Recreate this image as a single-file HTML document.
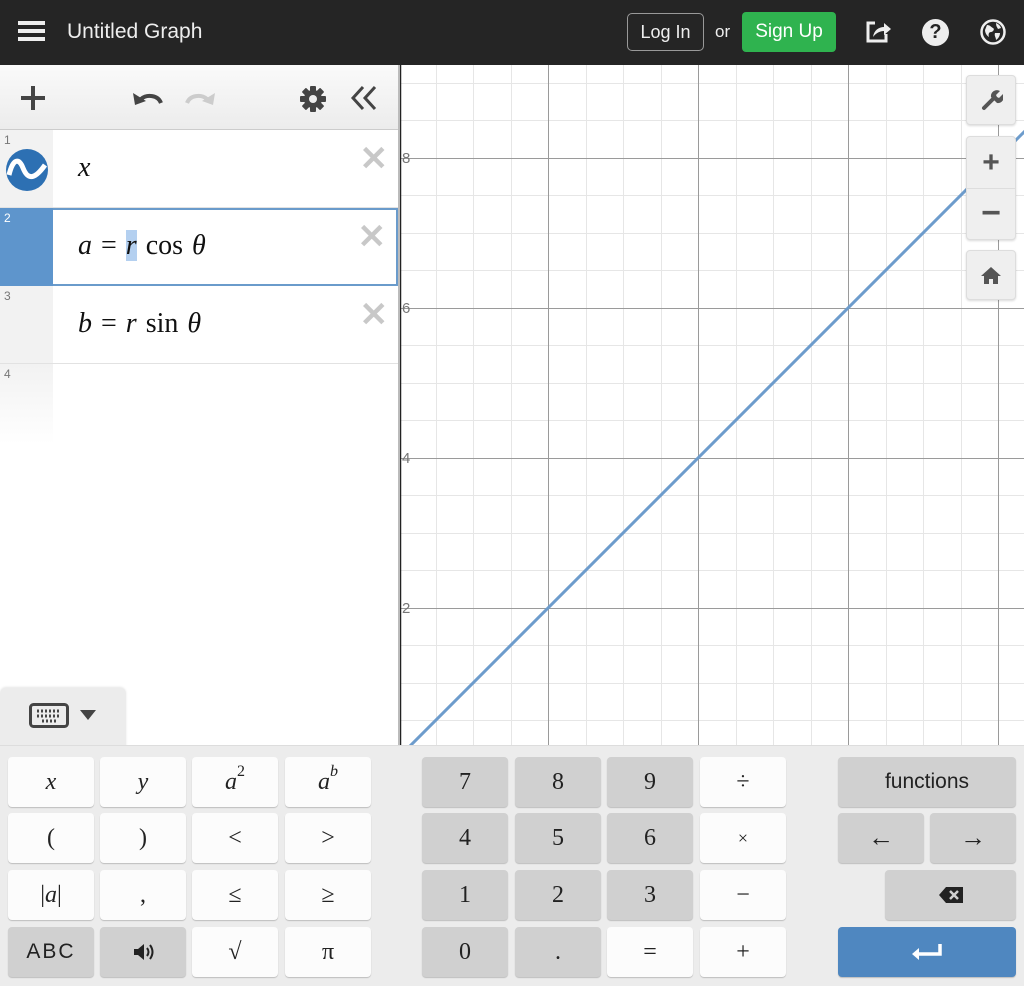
<!DOCTYPE html>
<html><head><meta charset="utf-8"><style>
*{box-sizing:border-box;margin:0;padding:0}
body{width:1024px;height:986px;overflow:hidden;background:#fff;font-family:"Liberation Sans",sans-serif;position:relative}
.hdr{position:absolute;left:0;top:0;width:1024px;height:65px;background:#252525;color:#eee}
.abs{position:absolute}
.tb{position:absolute;left:0;top:65px;width:398px;height:65px;background:linear-gradient(#fafafa,#ececec);border-bottom:1px solid #ccc}
.row{position:absolute;left:0;width:398px;height:78px;border-bottom:1px solid #e2e2e2;background:#fff}
.gut{position:absolute;left:0;top:0;width:53px;height:100%;background:#f2f2f2}
.num{position:absolute;left:4px;top:3px;font-size:12px;color:#777}
.math{position:absolute;left:78px;font-family:"Liberation Serif",serif;font-size:28px;color:#111;word-spacing:2px}
.math i{font-style:italic}
.x{position:absolute;right:10px;top:12px;font-size:34px;color:#c8c8c8;font-weight:bold;line-height:1}
.kb{position:absolute;left:0;top:745px;width:1024px;height:241px;background:#ececec;border-top:1px solid #ddd}
.k{position:absolute;width:86px;height:50px;border-radius:4px;background:#fcfcfc;box-shadow:0 1px 1px rgba(0,0,0,.2);display:flex;align-items:center;justify-content:center;font-family:"Liberation Serif",serif;font-size:24px;color:#222}
.g{background:#d0d0d0}
.i{font-style:italic}
.sb{position:absolute;left:966px;width:50px;background:#efefef;border:1px solid #ddd;border-radius:4px;box-shadow:0 1px 2px rgba(0,0,0,.15);display:flex;align-items:center;justify-content:center;color:#555}
</style></head><body>
<div class="hdr">
 <div class="abs" style="left:18px;top:21px;width:27px;height:4px;background:#eee;box-shadow:0 8px 0 #eee,0 16px 0 #eee"></div>
 <div class="abs" style="left:67px;top:20px;font-size:21px">Untitled Graph</div>
 <div class="abs" style="left:627px;top:13px;width:77px;height:38px;border:1px solid #999;border-radius:5px;font-size:18px;line-height:36px;text-align:center">Log In</div>
 <div class="abs" style="left:715px;top:22px;font-size:17px">or</div>
 <div class="abs" style="left:742px;top:12px;width:94px;height:40px;background:#2fb34f;border-radius:4px;font-size:19px;line-height:40px;text-align:center;color:#fff">Sign Up</div>
 <svg class="abs" style="left:864px;top:18px" width="28" height="28" viewBox="0 0 28 28"><path d="M11 5H4v18h18v-7" fill="none" stroke="#eee" stroke-width="3"/><path d="M9 19c1-7 6-10 11-10V5l7 6-7 6v-4c-4 0-8 2-11 6z" fill="#eee"/></svg>
 <div class="abs" style="left:922px;top:19px;width:27px;height:27px;border-radius:50%;background:#eee;color:#252525;font-weight:bold;font-size:20px;text-align:center;line-height:27px">?</div>
 <svg class="abs" style="left:979px;top:18px" width="28" height="28" viewBox="0 0 28 28"><circle cx="14" cy="14" r="11.5" fill="none" stroke="#eee" stroke-width="2.5"/><path d="M8 7c3 0 4 2 6 3s0 4-2 4-3 2-2 5c-2-1-4-4-4-7zM17 5c2 1 4 2 5 5l-3 1c-1-2-2-3-2-6zM16 15h5c0 3-2 6-4 7 0-3-2-4-1-7z" fill="#eee"/></svg>
</div>

<svg class="abs" style="left:399px;top:65px" width="625" height="680" viewBox="399 65 625 680">
 <g stroke="#e6e6e6" stroke-width="1">
  <path d="M436.5 65V745M473.5 65V745M511.5 65V745M586.5 65V745M623.5 65V745M661.5 65V745M736.5 65V745M773.5 65V745M811.5 65V745M886.5 65V745M923.5 65V745M961.5 65V745M1036 65V745"/>
  <path d="M399 720.5H1024M399 683.5H1024M399 645.5H1024M399 570.5H1024M399 533.5H1024M399 495.5H1024M399 420.5H1024M399 383.5H1024M399 345.5H1024M399 270.5H1024M399 233.5H1024M399 195.5H1024M399 120.5H1024M399 83.5H1024"/>
 </g>
 <g stroke="#9a9a9a" stroke-width="1">
  <path d="M548.5 65V745M698.5 65V745M848.5 65V745M998.5 65V745M399 608.5H1024M399 458.5H1024M399 308.5H1024M399 158.5H1024"/>
 </g>
 <path d="M400 65V745" stroke="#222" stroke-width="2.5"/>
 <g font-size="15" fill="#777" font-family="Liberation Sans"><text x="402" y="163">8</text><text x="402" y="313">6</text><text x="402" y="463">4</text><text x="402" y="613">2</text></g>
 <path d="M398 758L1091 65" stroke="#6d9ccc" stroke-width="3"/>
</svg>
<div class="sb" style="top:75px;height:50px"><svg width="24" height="24" viewBox="0 0 24 24"><path d="M5 20l9-9" stroke="#555" stroke-width="4" stroke-linecap="round"/><path d="M12 9a6 6 0 0 1 9-6l-4 4 1 2 2 1 4-4a6 6 0 0 1-6 9z" fill="#555"/></svg></div>
<div class="sb" style="top:136px;height:104px;flex-direction:column"><div style="height:50px;line-height:50px;font-size:30px;font-weight:bold">+</div><div style="height:50px;line-height:48px;font-size:34px;font-weight:bold;border-top:1px solid #ddd;width:100%;text-align:center">−</div></div>
<div class="sb" style="top:250px;height:50px"><svg width="22" height="20" viewBox="0 0 22 20"><path d="M11 2L1 11h3v8h5v-5h4v5h5v-8h3z" fill="#555"/></svg></div>

<div class="abs" style="left:398px;top:65px;width:2px;height:680px;background:#bbb"></div>
<div class="tb">
 <div class="abs" style="left:21px;top:31px;width:24px;height:4px;background:#444"></div><div class="abs" style="left:31px;top:21px;width:4px;height:24px;background:#444"></div>
 <svg class="abs" style="left:130px;top:18px" width="36" height="28" viewBox="0 0 36 28"><path d="M31 20c-3-8-14-9-20-4" fill="none" stroke="#444" stroke-width="4"/><path d="M3 10l2 12 11-4z" fill="#444"/></svg>
 <svg class="abs" style="left:182px;top:18px" width="36" height="28" viewBox="0 0 36 28"><path d="M5 20c3-8 14-9 20-4" fill="none" stroke="#ccc" stroke-width="4"/><path d="M33 10l-2 12-11-4z" fill="#ccc"/></svg>
 <svg class="abs" style="left:299px;top:20px" width="28" height="28" viewBox="0 0 28 28"><g fill="#444"><circle cx="14" cy="14" r="9"/><rect x="11" y="1" width="6" height="26" rx="1"/><rect x="1" y="11" width="26" height="6" rx="1"/><rect x="11" y="1" width="6" height="26" rx="1" transform="rotate(45 14 14)"/><rect x="11" y="1" width="6" height="26" rx="1" transform="rotate(-45 14 14)"/></g><circle cx="14" cy="14" r="4" fill="#eee"/></svg>
 <svg class="abs" style="left:350px;top:20px" width="28" height="26" viewBox="0 0 28 26"><path d="M13 2L3 13l10 11M25 2L15 13l10 11" fill="none" stroke="#444" stroke-width="3"/></svg>
</div>
<div class="row" style="top:130px"><div class="gut"></div><div class="num">1</div>
 <svg class="abs" style="left:5px;top:18px" width="44" height="44" viewBox="0 0 44 44"><circle cx="22" cy="22" r="21" fill="#2d70b3"/><path d="M4 27C8 10 14 10 18 20s10 14 22-3" fill="none" stroke="#fff" stroke-width="5"/></svg>
 <div class="math" style="top:22px"><i>x</i></div><div class="x">✕</div></div>
<div class="row" style="top:208px;border:2px solid #6a9bcb;border-left:none"><div class="gut" style="background:#5e95cc;top:-2px;height:78px"></div><div class="num" style="color:#fff;top:1px">2</div>
 <div class="math" style="top:20px"><i>a</i> = <i style="background:#b4d0f0">r</i> cos <i>θ</i></div><div class="x" style="top:10px">✕</div></div>
<div class="row" style="top:286px"><div class="gut"></div><div class="num">3</div>
 <div class="math" style="top:22px"><i>b</i> = <i>r</i> sin <i>θ</i></div><div class="x">✕</div></div>
<div class="abs" style="left:0;top:364px;width:53px;height:80px;background:linear-gradient(#f2f2f2,#fff)"></div><div class="num" style="top:367px">4</div>

<div class="abs" style="left:0;top:688px;width:126px;height:60px;background:#ececec;border-radius:6px 6px 0 0;box-shadow:0 -1px 2px rgba(0,0,0,.1)">
 <svg class="abs" style="left:29px;top:15px" width="40" height="26" viewBox="0 0 40 26"><rect x="1.5" y="1.5" width="37" height="22" rx="3" fill="none" stroke="#444" stroke-width="3"/><path d="M8 8h24M8 13h24M13 18h14" stroke="#444" stroke-width="3" stroke-dasharray="2 2"/></svg>
 <div class="abs" style="left:80px;top:22px;width:0;height:0;border-left:8px solid transparent;border-right:8px solid transparent;border-top:10px solid #444"></div>
</div>
<div class="kb"></div>
<div class="k i" style="left:8px;top:757px">x</div>
<div class="k i" style="left:100px;top:757px">y</div>
<div class="k" style="left:192px;top:757px"><i>a</i><span style="font-size:16px;position:relative;top:-10px">2</span></div>
<div class="k" style="left:285px;top:757px"><i>a</i><i style="font-size:16px;position:relative;top:-10px">b</i></div>
<div class="k" style="left:8px;top:813px">(</div>
<div class="k" style="left:100px;top:813px">)</div>
<div class="k" style="left:192px;top:813px">&lt;</div>
<div class="k" style="left:285px;top:813px">&gt;</div>
<div class="k" style="left:8px;top:870px">|<i>a</i>|</div>
<div class="k" style="left:100px;top:870px">,</div>
<div class="k" style="left:192px;top:870px">≤</div>
<div class="k" style="left:285px;top:870px">≥</div>
<div class="k g" style="left:8px;top:927px;font-family:'Liberation Sans';font-size:21px;letter-spacing:2px">ABC</div>
<div class="k g" style="left:100px;top:927px"><svg width="22" height="18" viewBox="0 0 22 18"><path d="M2 6h4l6-5v16l-6-5H2z" fill="#222"/><path d="M15 5q3 4 0 8M18 2q5 7 0 14" fill="none" stroke="#222" stroke-width="2"/></svg></div>
<div class="k" style="left:192px;top:927px">√</div>
<div class="k" style="left:285px;top:927px">π</div>
<div class="k g" style="left:422px;top:757px">7</div><div class="k g" style="left:515px;top:757px">8</div><div class="k g" style="left:607px;top:757px">9</div><div class="k" style="left:700px;top:757px">÷</div>
<div class="k g" style="left:422px;top:813px">4</div><div class="k g" style="left:515px;top:813px">5</div><div class="k g" style="left:607px;top:813px">6</div><div class="k" style="left:700px;top:813px;font-size:18px">×</div>
<div class="k g" style="left:422px;top:870px">1</div><div class="k g" style="left:515px;top:870px">2</div><div class="k g" style="left:607px;top:870px">3</div><div class="k" style="left:700px;top:870px">−</div>
<div class="k g" style="left:422px;top:927px">0</div><div class="k g" style="left:515px;top:927px">.</div><div class="k" style="left:607px;top:927px">=</div><div class="k" style="left:700px;top:927px">+</div>
<div class="k g" style="left:838px;top:757px;width:178px;font-family:'Liberation Sans';font-size:21px">functions</div>
<div class="k g" style="left:838px;top:813px;font-size:26px;font-weight:bold">←</div>
<div class="k g" style="left:930px;top:813px;font-size:26px;font-weight:bold">→</div>
<div class="k g" style="left:885px;top:870px;width:131px"><svg width="26" height="18" viewBox="0 0 26 18"><path d="M8 1h17v16H8L1 9z" fill="#222"/><path d="M12 5l8 8M20 5l-8 8" stroke="#d0d0d0" stroke-width="2.5"/></svg></div>
<div class="k" style="left:838px;top:927px;width:178px;background:#4f87c0"><svg width="34" height="20" viewBox="0 0 34 20"><path d="M30 2v10H6" fill="none" stroke="#fff" stroke-width="3.5"/><path d="M2 12l7-6v12z" fill="#fff"/></svg></div>
</body></html>
